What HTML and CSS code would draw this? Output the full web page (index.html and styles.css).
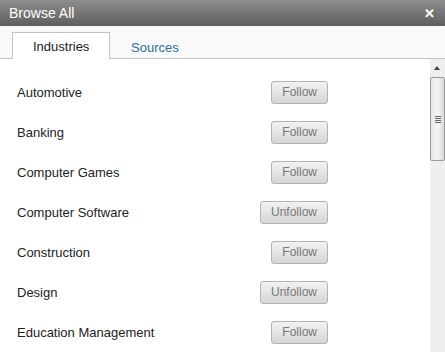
FILE: index.html
```html
<!DOCTYPE html>
<html lang="en">
<head>
    <meta charset="UTF-8">
    <meta name="viewport" content="width=device-width, initial-scale=1.0">
    <title>Browse All</title>
    <link rel="stylesheet" href="styles.css">
</head>
<body>
    <div class="dialog">
        <div class="dialog-head">
            <span class="dialog-title">Browse All</span>
            <span class="dialog-close">&#x2715;</span>
        </div>
        <div class="tabs">
            <div class="tab active">Industries</div>
            <div class="tab">Sources</div>
        </div>
        <div class="body">
            <div class="list">
                <div class="row"><span class="name">Automotive</span><button class="btn">Follow</button></div>
                <div class="row"><span class="name">Banking</span><button class="btn">Follow</button></div>
                <div class="row"><span class="name">Computer Games</span><button class="btn">Follow</button></div>
                <div class="row"><span class="name">Computer Software</span><button class="btn">Unfollow</button></div>
                <div class="row"><span class="name">Construction</span><button class="btn">Follow</button></div>
                <div class="row"><span class="name">Design</span><button class="btn">Unfollow</button></div>
                <div class="row"><span class="name">Education Management</span><button class="btn">Follow</button></div>
            </div>
            <div class="scrollbar">
                <div class="scroll-up"></div>
                <div class="scroll-thumb"><span class="grip"></span></div>
            </div>
        </div>
    </div>
</body>
</html>
```

FILE: styles.css
```css
body {
    margin: 0;
    font-family: "Liberation Sans", Arial, sans-serif;
    background-color: #fff;
}
.dialog {
    width: 445px;
    height: 352px;
    display: flex;
    flex-direction: column;
    overflow: hidden;
}
.dialog-head {
    height: 27px;
    display: flex;
    align-items: center;
    justify-content: space-between;
    padding: 0 10px 0 9px;
    background: linear-gradient(#8d8d8d, #5f5f5f);
    color: #fff;
}
.dialog-title {
    font-size: 14px;
}
.dialog-close {
    font-size: 13px;
    font-weight: bold;
}
.tabs {
    height: 33px;
    display: flex;
    align-items: flex-end;
    padding-left: 12px;
    background-color: #f9f9f9;
    border-bottom: 1px solid #c4c4c4;
}
.tab {
    height: 23px;
    line-height: 23px;
    padding: 2px 20px 0;
    font-size: 13px;
    color: #2d6e9c;
    border: 1px solid transparent;
    border-bottom: none;
    margin-bottom: -1px;
}
.tab.active {
    width: 56px;
    color: #222;
    background-color: #fff;
    border-color: #c4c4c4;
    height: 24px;
}
.body {
    flex: 1;
    display: flex;
}
.list {
    flex: 1;
    padding-top: 13px;
}
.row {
    height: 40px;
    display: flex;
    align-items: center;
    justify-content: space-between;
    padding: 0 102px 0 17px;
}
.name {
    font-size: 13px;
    color: #222;
}
.btn {
    height: 23px;
    padding: 0 10px;
    font-family: "Liberation Sans", Arial, sans-serif;
    font-size: 12px;
    color: #777;
    border: 1px solid #b3b3b3;
    border-radius: 3px;
    background: linear-gradient(#f2f2f2, #d6d6d6);
}
.scrollbar {
    width: 15px;
    background-color: #efefef;
    display: flex;
    flex-direction: column;
    align-items: center;
}
.scroll-up {
    height: 18px;
    width: 15px;
    position: relative;
}
.scroll-up::after {
    content: "";
    position: absolute;
    left: 4px;
    top: 7px;
    border-left: 3px solid transparent;
    border-right: 3px solid transparent;
    border-bottom: 4px solid #444;
}
.scroll-thumb {
    width: 13px;
    height: 82px;
    border: 1px solid #9a9a9a;
    border-radius: 2px;
    background: linear-gradient(to right, #e6e6e6, #f4f4f4 50%, #d9d9d9);
    display: flex;
    align-items: center;
    justify-content: center;
}
.grip {
    width: 6px;
    height: 7px;
    background: repeating-linear-gradient(#666 0 1px, transparent 1px 2px);
}
```
